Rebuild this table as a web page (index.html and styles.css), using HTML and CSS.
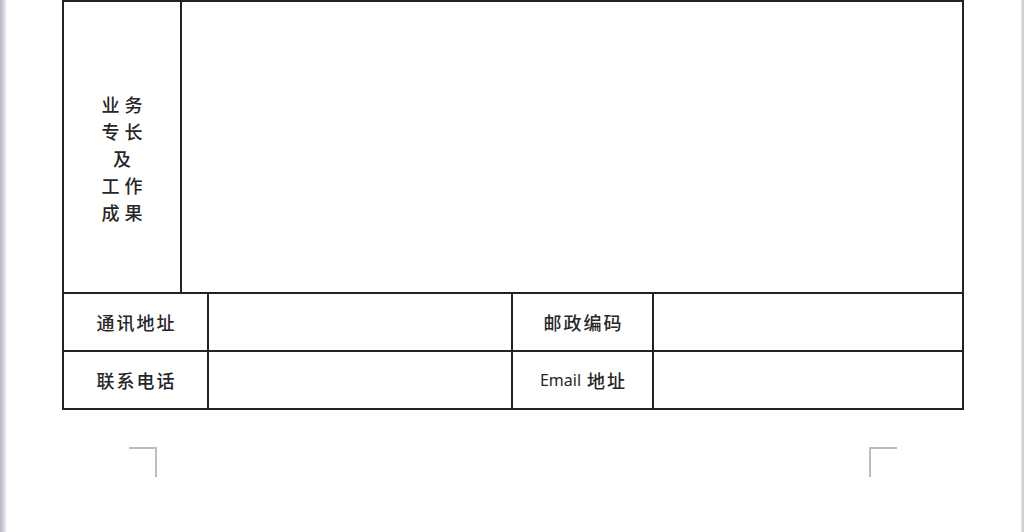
FILE: index.html
```html
<!DOCTYPE html>
<html lang="zh-CN">
<head>
<meta charset="utf-8">
<title>表格</title>
<link rel="stylesheet" href="styles.css">
</head>
<body>
<div class="frame">
  <div class="edge-left"></div>
  <main class="page">
    <div class="sheet">
      <div class="row-top">
        <div class="cell cell-label-v">
          <div class="vlabel">
            <span>业务</span>
            <span>专长</span>
            <span>及</span>
            <span>工作</span>
            <span>成果</span>
          </div>
        </div>
        <div class="cell cell-body"></div>
      </div>
      <div class="row-info">
        <div class="cell c1 label">通讯地址</div>
        <div class="cell c2"></div>
        <div class="cell c3 label">邮政编码</div>
        <div class="cell c4"></div>
      </div>
      <div class="row-info">
        <div class="cell c1 label">联系电话</div>
        <div class="cell c2"></div>
        <div class="cell c3 label label-mixed"><span class="latin">Email</span><span class="cjk">地址</span></div>
        <div class="cell c4"></div>
      </div>
    </div>
    <div class="marks">
      <div class="mark mark-left"></div>
      <div class="mark mark-right"></div>
    </div>
  </main>
  <div class="edge-right"></div>
</div>
</body>
</html>
```

FILE: styles.css
```css
html, body {
  margin: 0;
  padding: 0;
  background: #ffffff;
}

body {
  font-family: "Noto Sans CJK SC", "Noto Sans", "Liberation Sans", sans-serif;
  color: #262626;
  width: 1024px;
  height: 532px;
  overflow: hidden;
}

.frame {
  display: flex;
  height: 532px;
}

.edge-left {
  width: 6px;
  flex: none;
  background: linear-gradient(to right, #b9b9c2, #d4d4da 60%, #ececef);
}

.edge-right {
  width: 3px;
  flex: none;
  background: linear-gradient(to right, #e6e6e8, #c9c9cd);
}

.page {
  flex: 1;
  padding-left: 56px;
  display: flex;
  flex-direction: column;
}

.sheet {
  width: 902px;
  box-sizing: border-box;
  border-left: 2px solid #222;
  border-top: 2px solid #222;
}

.cell {
  box-sizing: border-box;
  border-right: 2px solid #222;
  border-bottom: 2px solid #222;
}

.row-top {
  display: flex;
  height: 292px;
}

.cell-label-v {
  width: 118px;
  display: flex;
  align-items: center;
  justify-content: center;
  padding-top: 23px;
}

.cell-body {
  flex: 1;
}

.vlabel {
  display: flex;
  flex-direction: column;
  align-items: center;
  font-size: 18px;
  font-weight: 500;
  line-height: 27px;
  letter-spacing: 5px;
  padding-left: 5px;
}

.row-info {
  display: grid;
  grid-template-columns: 145px 304px 141px 310px;
  height: 58px;
}

.label {
  display: flex;
  align-items: center;
  justify-content: center;
  font-size: 18px;
  font-weight: 500;
  letter-spacing: 2px;
  padding-left: 2px;
}

.label-mixed {
  letter-spacing: 0;
  padding-left: 0;
}

.label-mixed .latin {
  font-family: "Noto Sans", "Open Sans", sans-serif;
  font-size: 16px;
  font-weight: 400;
}

.label-mixed .cjk {
  font-size: 18px;
  letter-spacing: 2px;
  margin-left: 6px;
  margin-right: -2px;
}

.marks {
  display: flex;
  justify-content: space-between;
  width: 768px;
  margin-left: 67px;
  margin-top: 37px;
}

.mark {
  width: 28px;
  height: 30px;
  box-sizing: border-box;
  border-top: 2px solid #bdbdbd;
}

.mark-left {
  border-right: 2px solid #bdbdbd;
}

.mark-right {
  border-left: 2px solid #bdbdbd;
}
```
